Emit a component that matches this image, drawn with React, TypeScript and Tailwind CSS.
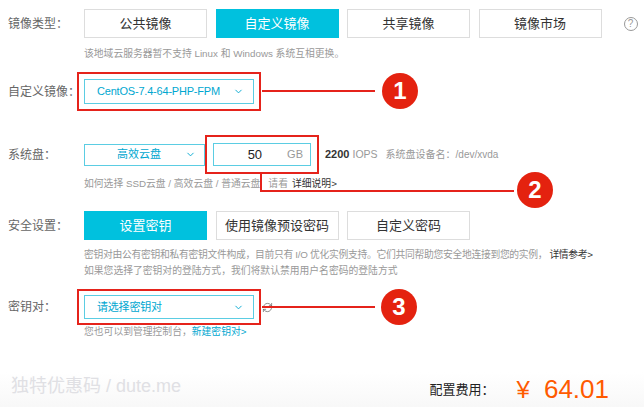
import { ChevronDown, RefreshCw } from "lucide-react";

const FONT = "font-['Liberation_Sans','Noto_Sans_CJK_SC',sans-serif]";

function Label({ text }: { text: string }) {
  return <div className="w-[84px] shrink-0 pl-[8px] text-[12px] text-[#666]">{text}</div>;
}

function TabButton({ text, active }: { text: string; active?: boolean }) {
  return (
    <div
      className={
        active
          ? "flex h-[29px] w-[123px] items-center justify-center bg-[#00c1de] text-[13px] text-white"
          : "flex h-[29px] w-[123px] items-center justify-center border border-[#ddd] bg-white text-[13px] text-[#333]"
      }
    >
      {text}
    </div>
  );
}

function Select({ text, h }: { text: string; h: string }) {
  return (
    <div
      className={`flex w-[170px] items-center border border-[#5bcde3] bg-white pl-[12px] pr-[9px] text-[11px] text-[#00a7d0] ${h}`}
    >
      <span className="flex-1 whitespace-nowrap tracking-[-0.2px]">{text}</span>
      <ChevronDown size={11} strokeWidth={2} className="text-[#00a7d0]" />
    </div>
  );
}

function Badge({ n, className }: { n: string; className: string }) {
  return (
    <div
      className={`absolute flex h-[36px] w-[36px] items-center justify-center rounded-full bg-[#e4220f] text-[24px] font-bold text-white ${className}`}
    >
      {n}
    </div>
  );
}

export default function App() {
  return (
    <div className={`relative h-[407px] w-[644px] overflow-hidden bg-white ${FONT}`}>
      <div className="flex flex-col">
        {/* 镜像类型 */}
        <div className="mt-[9px] flex h-[29px] items-center">
          <Label text="镜像类型：" />
          <div className="flex shrink-0 gap-[8.5px]">
            <TabButton text="公共镜像" />
            <TabButton text="自定义镜像" active />
            <TabButton text="共享镜像" />
            <TabButton text="镜像市场" />
          </div>
          <div className="ml-[22px] flex h-[14px] w-[14px] shrink-0 items-center justify-center rounded-full border-[1.5px] border-[#999] text-[10px] leading-none text-[#999]">
            ?
          </div>
        </div>
        <div className="ml-[84px] mt-[8px] h-[16px] whitespace-nowrap text-[9.8px] leading-[16px] text-[#999]">
          该地域云服务器暂不支持 Linux 和 Windows 系统互相更换。
        </div>

        {/* 自定义镜像 */}
        <div className="mt-[10px] flex items-center">
          <Label text="自定义镜像：" />
          <div className="-ml-[7px] border-2 border-[#e5231b] p-[5px]">
            <Select text="CentOS-7.4-64-PHP-FPM" h="h-[25px]" />
          </div>
        </div>

        {/* 系统盘 */}
        <div className="mt-[24px] flex items-center">
          <Label text="系统盘：" />
          <div className="flex h-[22px] w-[121px] items-center border border-[#5bcde3] px-[8px] text-[11px] text-[#00a7d0]">
            <span className="flex-1 text-center">高效云盘</span>
            <ChevronDown size={11} strokeWidth={2} />
          </div>
          <div className="border-2 border-[#e5231b] px-[6px] py-[6px]">
            <div className="flex h-[23px] w-[98px] items-center border border-[#5bcde3] pr-[7px] text-[13px]">
              <span className="flex-1 pr-[25px] text-right text-[#222]">50</span>
              <span className="text-[11px] text-[#999]">GB</span>
            </div>
          </div>
          <span className="ml-[6px] text-[11px] font-bold text-[#333]">2200</span>
          <span className="ml-[3px] text-[10.5px] text-[#999]">IOPS</span>
          <span className="ml-[8px] whitespace-nowrap text-[10px] text-[#999]">系统盘设备名：/dev/xvda</span>
        </div>
        <div className="ml-[84px] mt-[2px] flex h-[16px] whitespace-nowrap text-[9.8px] leading-[16px] text-[#999]">
          <span>如何选择 SSD云盘 / 高效云盘 / 普通云盘</span>
          <span className="ml-[8px]">请看</span>
          <span className="ml-[4px] text-[#333]">详细说明&gt;</span>
        </div>

        {/* 安全设置 */}
        <div className="mt-[19px] flex h-[29px] items-center">
          <Label text="安全设置：" />
          <div className="flex gap-[8.5px]">
            <TabButton text="设置密钥" active />
            <TabButton text="使用镜像预设密码" />
            <TabButton text="自定义密码" />
          </div>
        </div>
        <div className="ml-[84px] mt-[7px] whitespace-nowrap text-[9.8px] leading-[16px] text-[#999]">
          <div className="tracking-[-0.3px]">
            密钥对由公有密钥和私有密钥文件构成，目前只有 I/O 优化实例支持。它们共同帮助您安全地连接到您的实例，
            <span className="ml-[2px] text-[#333]">详情参考&gt;</span>
          </div>
          <div>如果您选择了密钥对的登陆方式，我们将默认禁用用户名密码的登陆方式</div>
        </div>

        {/* 密钥对 */}
        <div className="mt-[10px] flex items-center">
          <Label text="密钥对：" />
          <div className="-ml-[7px] border-2 border-[#e5231b] px-[5px] py-[4px]">
            <Select text="请选择密钥对" h="h-[24px]" />
          </div>
          <RefreshCw size={11} strokeWidth={1.6} className="ml-[1px] text-[#666]" />
        </div>
        <div className="ml-[84px] mt-[-1px] h-[16px] whitespace-nowrap text-[9.8px] leading-[16px] text-[#999]">
          您也可以到管理控制台，<span className="text-[#00a7d0]">新建密钥对&gt;</span>
        </div>

        {/* 底部 */}
        <div className="mt-[32px] flex h-[45px] items-start bg-gradient-to-b from-white to-[#f6f6f6]">
          <div className="ml-[11px] mt-[5px] text-[18px] leading-none text-[#e0e0e4]">
            独特优惠码 / dute.me
          </div>
          <div className="ml-auto mr-[35px] mt-[-2px] flex items-center">
            <span className="text-[13px] text-[#222]">配置费用：</span>
            <span className="ml-[22px] text-[24px] text-[#ff5a00]">¥</span>
            <span className="ml-[14px] text-[26px] text-[#ff5a00]">64.01</span>
          </div>
        </div>
      </div>

      {/* annotations */}
      <div className="absolute left-[262px] top-[90px] h-[2px] w-[113px] bg-[#e5231b]" />
      <Badge n="1" className="left-[382px] top-[73px]" />
      <div className="absolute left-[260px] top-[172px] h-[20px] w-[2px] bg-[#e5231b]" />
      <div className="absolute left-[260px] top-[190px] h-[2px] w-[254px] bg-[#e5231b]" />
      <Badge n="2" className="left-[517px] top-[172px]" />
      <div className="absolute left-[262px] top-[306px] h-[2px] w-[113px] bg-[#e5231b]" />
      <Badge n="3" className="left-[381px] top-[289px]" />
    </div>
  );
}
